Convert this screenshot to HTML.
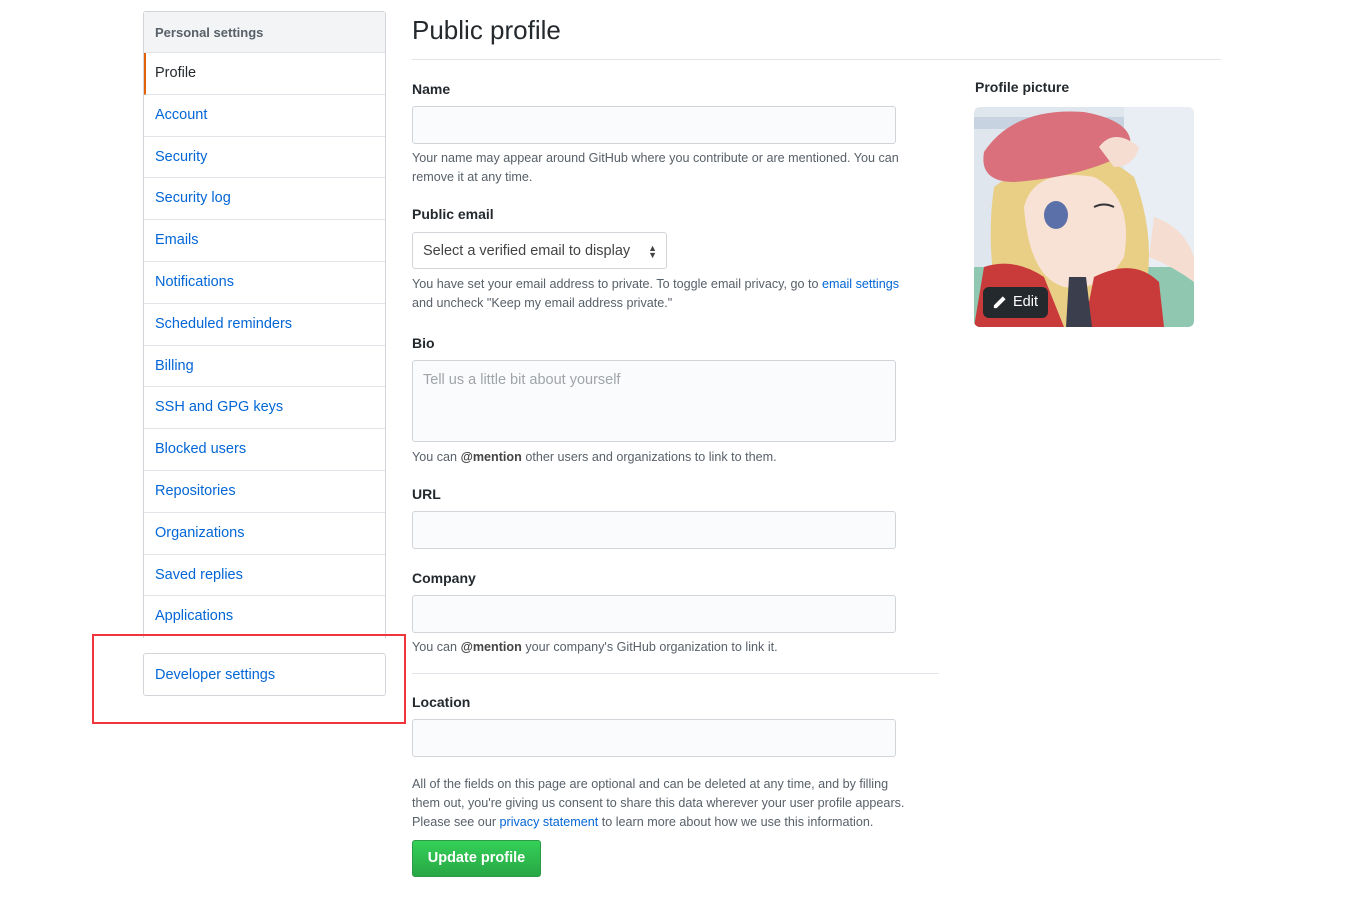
<!DOCTYPE html>
<html><head><meta charset="utf-8"><style>
*{box-sizing:border-box;margin:0;padding:0}
body{width:1352px;height:905px;background:#fff;font-family:"Liberation Sans",sans-serif;color:#24292e;position:relative;overflow:hidden}
.a{position:absolute}
.side{left:143px;top:11px;width:243px;border:1px solid #d1d5da;border-radius:3px 3px 0 0;border-bottom:none}
.side div{height:41.8px;line-height:41px;padding-left:11px;border-bottom:1px solid #e1e4e8;font-size:14.5px;color:#0366d6}
.side .hd{background:#f3f4f6;color:#586069;font-weight:bold;font-size:13px;height:41px}
.side .sel{color:#24292e;border-left:2px solid #e36209;padding-left:9px}
.lbl{font-size:14px;font-weight:bold;left:412px}
.inp{left:412px;width:484px;height:38px;border:1px solid #d1d5da;border-radius:3px;background:#fafbfc}
.note{left:412px;font-size:12.6px;color:#586069;line-height:19px}
a{color:#0366d6;text-decoration:none}
</style></head><body>
<div class="a side">
<div class="hd">Personal settings</div>
<div class="sel">Profile</div>
<div>Account</div><div>Security</div><div>Security log</div><div>Emails</div><div>Notifications</div><div>Scheduled reminders</div><div>Billing</div><div>SSH and GPG keys</div><div>Blocked users</div><div>Repositories</div><div>Organizations</div><div>Saved replies</div><div style="border-bottom:none">Applications</div>
</div>
<div class="a" style="left:143px;top:653px;width:243px;height:43px;border:1px solid #d1d5da;border-radius:3px;line-height:42px;padding-left:11px;font-size:14.5px;color:#0366d6">Developer settings</div>
<div class="a" style="left:92px;top:634px;width:314px;height:90px;border:2px solid #f0353b"></div>

<div class="a" style="left:412px;top:15px;font-size:26px">Public profile</div>
<div class="a" style="left:412px;top:59px;width:809px;height:1px;background:#e1e4e8"></div>

<div class="a lbl" style="top:81px">Name</div>
<div class="a inp" style="top:106px"></div>
<div class="a note" style="top:149px;width:515px">Your name may appear around GitHub where you contribute or are mentioned. You can remove it at any time.</div>

<div class="a lbl" style="top:206px">Public email</div>
<div class="a" style="left:412px;top:232px;width:255px;height:37px;border:1px solid #d1d5da;border-radius:3px;font-size:14.5px;line-height:36px;padding-left:10px;color:#444">Select a verified email to display<span style="position:absolute;right:9px;font-size:9px;line-height:7px;top:12px">▲<br>▼</span></div>
<div class="a note" style="top:275px;width:505px">You have set your email address to private. To toggle email privacy, go to <a>email settings</a> and uncheck "Keep my email address private."</div>

<div class="a lbl" style="top:335px">Bio</div>
<div class="a inp" style="top:360px;height:82px;padding:11px 10px;font-size:14.5px;color:#a0a4a8">Tell us a little bit about yourself</div>
<div class="a note" style="top:448px">You can <b style="color:#444">@mention</b> other users and organizations to link to them.</div>

<div class="a lbl" style="top:486px">URL</div>
<div class="a inp" style="top:511px"></div>

<div class="a lbl" style="top:570px">Company</div>
<div class="a inp" style="top:595px"></div>
<div class="a note" style="top:638px">You can <b style="color:#444">@mention</b> your company's GitHub organization to link it.</div>
<div class="a" style="left:412px;top:673px;width:527px;height:1px;background:#e1e4e8"></div>

<div class="a lbl" style="top:694px">Location</div>
<div class="a inp" style="top:719px"></div>
<div class="a note" style="top:775px;width:505px">All of the fields on this page are optional and can be deleted at any time, and by filling them out, you're giving us consent to share this data wherever your user profile appears. Please see our <a>privacy statement</a> to learn more about how we use this information.</div>
<div class="a" style="left:412px;top:840px;width:129px;height:37px;border-radius:3px;background:linear-gradient(#34d058,#28a745);border:1px solid #2a9a45;color:#fff;font-weight:bold;font-size:14.5px;line-height:35px;text-align:center">Update profile</div>

<div class="a lbl" style="left:975px;top:79px">Profile picture</div>
<div class="a" style="left:974px;top:107px;width:220px;height:220px;border-radius:6px;overflow:hidden">
<svg width="220" height="220" viewBox="0 0 220 220">
<rect width="220" height="220" fill="#dfe6ee"/>
<rect x="0" y="10" width="220" height="12" fill="#c7d3e0"/>
<rect x="150" y="0" width="70" height="160" fill="#e8eef3"/>
<rect x="0" y="160" width="220" height="60" fill="#8fc7b0"/>
<path d="M180 110 Q210 120 220 150 L220 175 Q200 160 175 150Z" fill="#f6ddd2"/>
<path d="M20 80 Q10 150 30 220 L160 220 Q190 150 160 70 Q100 20 20 80Z" fill="#e9cf85"/>
<path d="M50 100 Q60 60 120 70 Q160 90 150 150 Q130 185 90 180 Q55 170 50 100Z" fill="#f8e2d6"/>
<ellipse cx="82" cy="108" rx="12" ry="14" fill="#5b6fa8"/>
<path d="M120 100 Q130 95 140 100" stroke="#333" stroke-width="2" fill="none"/>
<path d="M0 220 L10 160 Q40 150 70 170 L90 220Z" fill="#c93a3a"/>
<path d="M110 220 L120 170 Q160 150 185 175 L190 220Z" fill="#c93a3a"/>
<path d="M95 170 L112 170 L118 220 L92 220Z" fill="#3a3e4d"/>
<path d="M10 45 Q40 0 110 5 Q165 15 155 45 Q110 70 40 75 Q5 75 10 45Z" fill="#d9707b"/>
<path d="M125 40 Q140 20 165 40 Q160 60 140 60Z" fill="#f6ddd2"/>
</svg>
<div class="a" style="left:9px;top:180px;width:65px;height:31px;background:#24292e;border-radius:6px;color:#fff;font-size:14.5px;line-height:31px;padding-left:30px">Edit
<svg class="a" style="left:9px;top:8px" width="15" height="15" viewBox="0 0 16 16"><path d="M11.5 1.5l3 3L5 14H2v-3z" fill="#fff"/></svg></div>
</div>
</body></html>
